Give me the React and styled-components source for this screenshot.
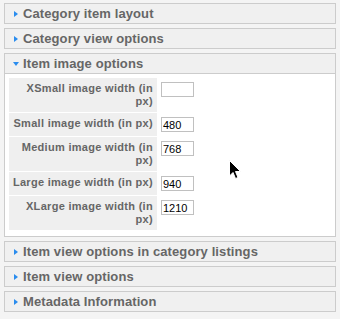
import React from "react";
import styled, { createGlobalStyle } from "styled-components";

const GlobalStyle = createGlobalStyle`
  html, body {
    margin: 0;
    padding: 0;
    background: #f4f4f4;
    font-family: "Liberation Sans", Arial, sans-serif;
  }
`;

const Page = styled.div`
  position: relative;
  width: 340px;
  height: 319px;
  padding: 3px 4px 0;
  box-sizing: border-box;
  overflow: hidden;
`;

const Panel = styled.section`
  margin-bottom: 4px;
  border: 1px solid #cccccc;
  background: #ffffff;
`;

const Header = styled.h3`
  display: flex;
  align-items: center;
  height: 19px;
  margin: 0;
  padding-left: 7px;
  background: #f0f0f0;
  border-bottom: ${(props) => (props.open ? "1px solid #cccccc" : "none")};
  color: #666666;
  font-size: 13px;
  font-weight: bold;
  letter-spacing: 0.1px;
  line-height: 19px;
`;

const Arrow = styled.span`
  display: flex;
  justify-content: center;
  width: 7px;
  margin-right: 4px;

  &::before {
    content: "";
    display: block;
    width: 0;
    height: 0;
    border-style: solid;
    border-color: transparent;
    ${(props) =>
      props.open
        ? `border-width: 4px 3.5px 0 3.5px; border-top-color: #2a8cee; margin-top: 1px;`
        : `border-width: 3.5px 0 3.5px 4px; border-left-color: #2a8cee; margin-top: 1px;`}
  }
`;

const Body = styled.div`
  padding: 4px 4px 6px;
`;

const ParamList = styled.div`
  display: grid;
  grid-template-columns: 148px auto;
  row-gap: 1px;
`;

const Key = styled.label`
  padding: 4px 4px 4px 0;
  background: #efefef;
  color: #666666;
  font-size: 11px;
  font-weight: bold;
  letter-spacing: 0.3px;
  line-height: 13px;
  text-align: right;
`;

const Value = styled.div`
  display: flex;
  align-items: ${(props) => (props.wrapped ? "flex-start" : "center")};
  padding: 4px 0 4px 4px;
`;

const Input = styled.input`
  width: 33px;
  height: 15px;
  margin: 0;
  padding: 0 1px;
  box-sizing: border-box;
  border: 1px solid #c0c0c0;
  background: #ffffff;
  color: #000000;
  font-family: "Liberation Sans", Arial, sans-serif;
  font-size: 11px;
  outline: none;
`;

const Cursor = styled.svg`
  position: absolute;
  left: 229px;
  top: 160px;
  pointer-events: none;
`;

const fields = [
  { label: "XSmall image width (in px)", value: "", wrapped: true },
  { label: "Small image width (in px)", value: "480" },
  { label: "Medium image width (in px)", value: "768", wrapped: true },
  { label: "Large image width (in px)", value: "940" },
  { label: "XLarge image width (in px)", value: "1210", wrapped: true },
];

const Section = ({ title, open, children }) => (
  <Panel>
    <Header open={open}>
      <Arrow open={open} />
      {title}
    </Header>
    {open && <Body>{children}</Body>}
  </Panel>
);

export default function App() {
  return (
    <Page>
      <GlobalStyle />
      <Section title="Category item layout" />
      <Section title="Category view options" />
      <Section title="Item image options" open>
        <ParamList>
          {fields.map((field) => (
            <React.Fragment key={field.label}>
              <Key>{field.label}</Key>
              <Value wrapped={field.wrapped}>
                <Input type="text" defaultValue={field.value} />
              </Value>
            </React.Fragment>
          ))}
        </ParamList>
      </Section>
      <Section title="Item view options in category listings" />
      <Section title="Item view options" />
      <Section title="Metadata Information" />
      <Cursor width="13" height="20" viewBox="0 0 13 20">
        <path
          d="M0.5 0.5 L0.5 16 L4 12.5 L6.5 18.5 L9 17.5 L6.5 11.5 L11.5 11.5 Z"
          fill="#000000"
          stroke="#ffffff"
          strokeWidth="1"
        />
      </Cursor>
    </Page>
  );
}
